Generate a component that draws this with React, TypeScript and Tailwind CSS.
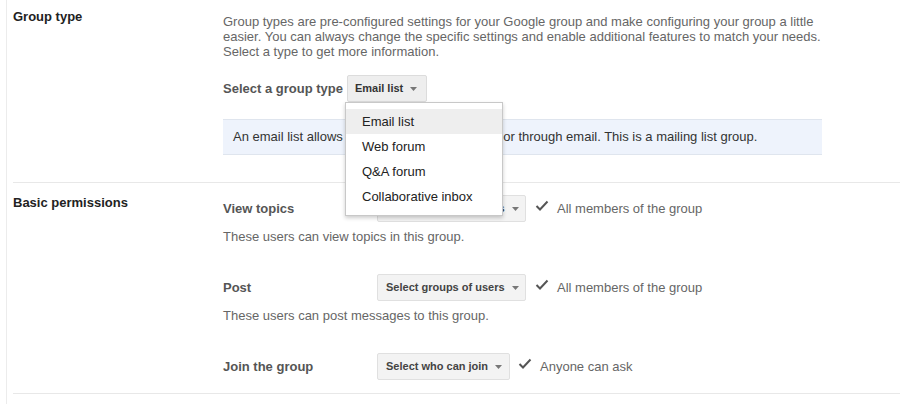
import React from "react";

const Arrow = () => (
  <svg width="7" height="4" viewBox="0 0 7 4" className="ml-[7px] shrink-0">
    <polygon points="0,0 7,0 3.5,4" fill="#777" />
  </svg>
);

const Check = () => (
  <svg width="14" height="12" viewBox="0 0 14 12" className="shrink-0 -mt-[6px]">
    <polyline points="1.5,6 5,9.5 12.5,1.5" fill="none" stroke="#555" strokeWidth="2" />
  </svg>
);

const SelBtn = ({ label, w }: { label: string; w: string }) => (
  <div
    className={`flex h-[27px] ${w} items-center rounded-[2px] border border-[#e0e0e0] bg-[#f3f3f3] pl-[8px] pr-[9px] text-[11px] font-bold text-[#444]`}
  >
    <span className="whitespace-nowrap">{label}</span>
    <Arrow />
  </div>
);

const PermRow = ({
  label,
  btn,
  w,
  value,
  desc,
  checkGap,
}: {
  label: string;
  btn: string;
  w: string;
  value: string;
  desc?: string;
  checkGap: string;
}) => (
  <div className="flex flex-col">
    <div className="flex items-center">
      <div className="w-[154px] text-[13px] font-bold leading-[15px] text-[#555]">{label}</div>
      <SelBtn label={btn} w={w} />
      <div className={`${checkGap} flex items-center`}>
        <Check />
        <span className="ml-[8px] text-[13px] leading-[15px] text-[#666]">{value}</span>
      </div>
    </div>
    {desc && <div className="mt-[7px] text-[13px] leading-[15px] text-[#666]">{desc}</div>}
  </div>
);

export default function App() {
  return (
    <div
      className="h-[404px] w-[900px] overflow-hidden bg-white"
      style={{ fontFamily: '"Liberation Sans", Arial, sans-serif' }}
    >
      <div className="ml-[6px] h-full border-l border-[#ececec] pl-[6px]">
        {/* Group type */}
        <div className="flex border-b border-[#e8e8e8] pb-[27px]">
          <div className="w-[210px] pt-[9px] text-[13px] font-bold leading-[15px] text-[#222]">Group type</div>
          <div className="flex w-[599px] flex-col pt-[14px]">
            <div className="text-[13px] leading-[15px] text-[#666]">
              Group types are pre-configured settings for your Google group and make configuring your group a little
              easier. You can always change the specific settings and enable additional features to match your needs.
              Select a type to get more information.
            </div>
            <div className="relative mt-[16px] flex items-center">
              <span className="mr-[4px] text-[13px] font-bold leading-[15px] text-[#555]">Select a group type</span>
              <div className="flex h-[27px] items-center rounded-[2px] border border-[#dcdcdc] bg-[#eeeeee] pl-[7px] pr-[9px] text-[11px] font-bold text-[#333]">
                <span>Email list</span>
                <Arrow />
              </div>
              <div className="absolute left-[122px] top-[27px] z-10 w-[158px] border border-[#c8c8c8] bg-white py-[6px] shadow-[0_2px_4px_rgba(0,0,0,0.2)]">
                {["Email list", "Web forum", "Q&A forum", "Collaborative inbox"].map((t, i) => (
                  <div
                    key={t}
                    className={`flex h-[25px] items-center pl-[16px] text-[13px] text-[#222] ${i === 0 ? "bg-[#eeeeee]" : ""}`}
                  >
                    {t}
                  </div>
                ))}
              </div>
            </div>
            <div className="mt-[17px] flex h-[36px] items-center border-y border-[#dfe5ee] bg-[#eef3fc] pl-[10px] text-[13px] text-[#333]">
              An email list allows users to post from the web or through email. This is a mailing list group.
            </div>
          </div>
        </div>

        {/* Basic permissions */}
        <div className="flex border-b border-[#e8e8e8] pb-[13px]">
          <div className="w-[210px] pt-[12px] text-[13px] font-bold leading-[15px] text-[#222]">Basic permissions</div>
          <div className="flex flex-col gap-[30px] pt-[12px]">
            <PermRow
              label="View topics"
              btn="Select groups of users"
              w="w-[149px]"
              value="All members of the group"
              desc="These users can view topics in this group."
              checkGap="ml-[9px]"
            />
            <PermRow
              label="Post"
              btn="Select groups of users"
              w="w-[149px]"
              value="All members of the group"
              desc="These users can post messages to this group."
              checkGap="ml-[9px]"
            />
            <PermRow
              label="Join the group"
              btn="Select who can join"
              w="w-[133px]"
              value="Anyone can ask"
              checkGap="ml-[8px]"
            />
          </div>
        </div>
      </div>
    </div>
  );
}
